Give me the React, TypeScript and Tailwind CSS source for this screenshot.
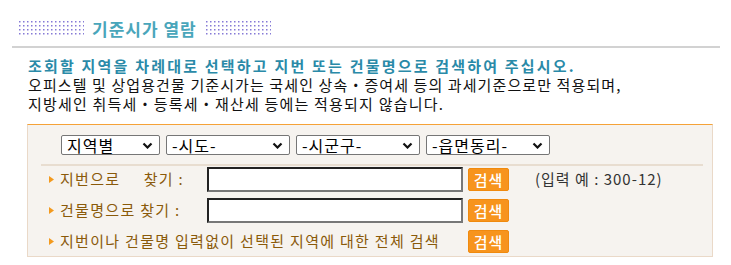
import React from "react"

const font = { fontFamily: '"Noto Sans CJK KR", "Noto Sans", sans-serif' }

function Dots() {
  return (
    <svg width="66" height="16" className="block">
      <defs>
        <pattern id="dot" width="4" height="4" patternUnits="userSpaceOnUse">
          <rect x="1" y="1" width="1.5" height="1.5" fill="#8579d6" />
        </pattern>
      </defs>
      <rect width="66" height="16" fill="url(#dot)" />
    </svg>
  )
}

function Bullet() {
  return (
    <svg width="5" height="7" className="shrink-0">
      <polygon points="0,0 5,3.5 0,7" fill="#f39a1e" />
    </svg>
  )
}

function Select({ label, w }: { label: string; w: string }) {
  return (
    <div
      className={`${w} h-[20px] border border-[#767676] rounded-[2px] bg-white flex items-center justify-between pl-[5px] pr-[6px] text-[16px] tracking-[1px] text-black leading-none`}
    >
      <span>{label}</span>
      <svg width="11" height="7" viewBox="0 0 11 7">
        <polyline points="1.5,1.5 5.5,5.5 9.5,1.5" fill="none" stroke="#111" strokeWidth="2.2" />
      </svg>
    </div>
  )
}

function Btn() {
  return (
    <div className="w-[41px] h-[23px] bg-[#f7941d] border border-[#f08a0e] rounded-[2px] text-white text-[15px] tracking-[1px] font-medium flex items-center justify-center leading-none">
      검색
    </div>
  )
}

function Field() {
  return (
    <div className="w-[256px] h-[25px] bg-white border-2 border-t-[#222] border-l-[#222] border-b-[#777] border-r-[#777]" />
  )
}

export default function App() {
  return (
    <div className="w-[731px] h-[265px] bg-white pl-3 pt-[18px]" style={font}>
      <div className="flex items-center h-[20px] pl-[6px]">
        <Dots />
        <span className="ml-[8px] mr-[8px] text-[17px] tracking-[1px] font-bold text-[#49a6bb] leading-none">기준시가 열람</span>
        <Dots />
      </div>
      <div className="mt-[8px] w-[708px] h-[2px] bg-[#d2d2d2]" />
      <div className="pl-4 pt-[8px] text-[15px] leading-[19px]">
        <p className="text-[#2a8aa8] font-bold tracking-[2.2px]">조회할 지역을 차례대로 선택하고 지번 또는 건물명으로 검색하여 주십시오.</p>
        <p className="text-[#111] tracking-[1.1px]">오피스텔 및 상업용건물 기준시가는 국세인 상속・증여세 등의 과세기준으로만 적용되며,</p>
        <p className="text-[#111] tracking-[1.2px]">지방세인 취득세・등록세・재산세 등에는 적용되지 않습니다.</p>
      </div>
      <div className="mt-[11px] ml-[15px] w-[686px] h-[133px] bg-[#f6f3ef] border border-[#ead9c8] border-t-[#f5a238] px-[13px]">
        <div className="flex gap-[6px] pl-[20px] pt-[10px]">
          <Select label="지역별" w="w-[99px]" />
          <Select label="-시도-" w="w-[124px]" />
          <Select label="-시군구-" w="w-[124px]" />
          <Select label="-읍면동리-" w="w-[124px]" />
        </div>
        <div className="mt-[9px] w-[662px] h-[2px] bg-[#e8ddd0]" />
        <div className="pl-[8px] text-[15px] text-[#8a5a0a] tracking-[1.3px]">
          <div className="flex items-center h-[25px] mt-[1px]">
            <Bullet />
            <span className="ml-[6px] w-[147px] whitespace-pre">지번으로     찾기 :</span>
            <Field />
            <div className="ml-[5px]"><Btn /></div>
            <span className="ml-[26px] text-[#333] tracking-[1px]">(입력 예 : 300-12)</span>
          </div>
          <div className="flex items-center h-[25px] mt-[6px]">
            <Bullet />
            <span className="ml-[6px] w-[147px]">건물명으로 찾기 :</span>
            <Field />
            <div className="ml-[5px]"><Btn /></div>
          </div>
          <div className="flex items-center h-[25px] mt-[6px]">
            <Bullet />
            <span className="ml-[6px] w-[408px] whitespace-nowrap">지번이나 건물명 입력없이 선택된 지역에 대한 전체 검색</span>
            <Btn />
          </div>
        </div>
      </div>
    </div>
  )
}
